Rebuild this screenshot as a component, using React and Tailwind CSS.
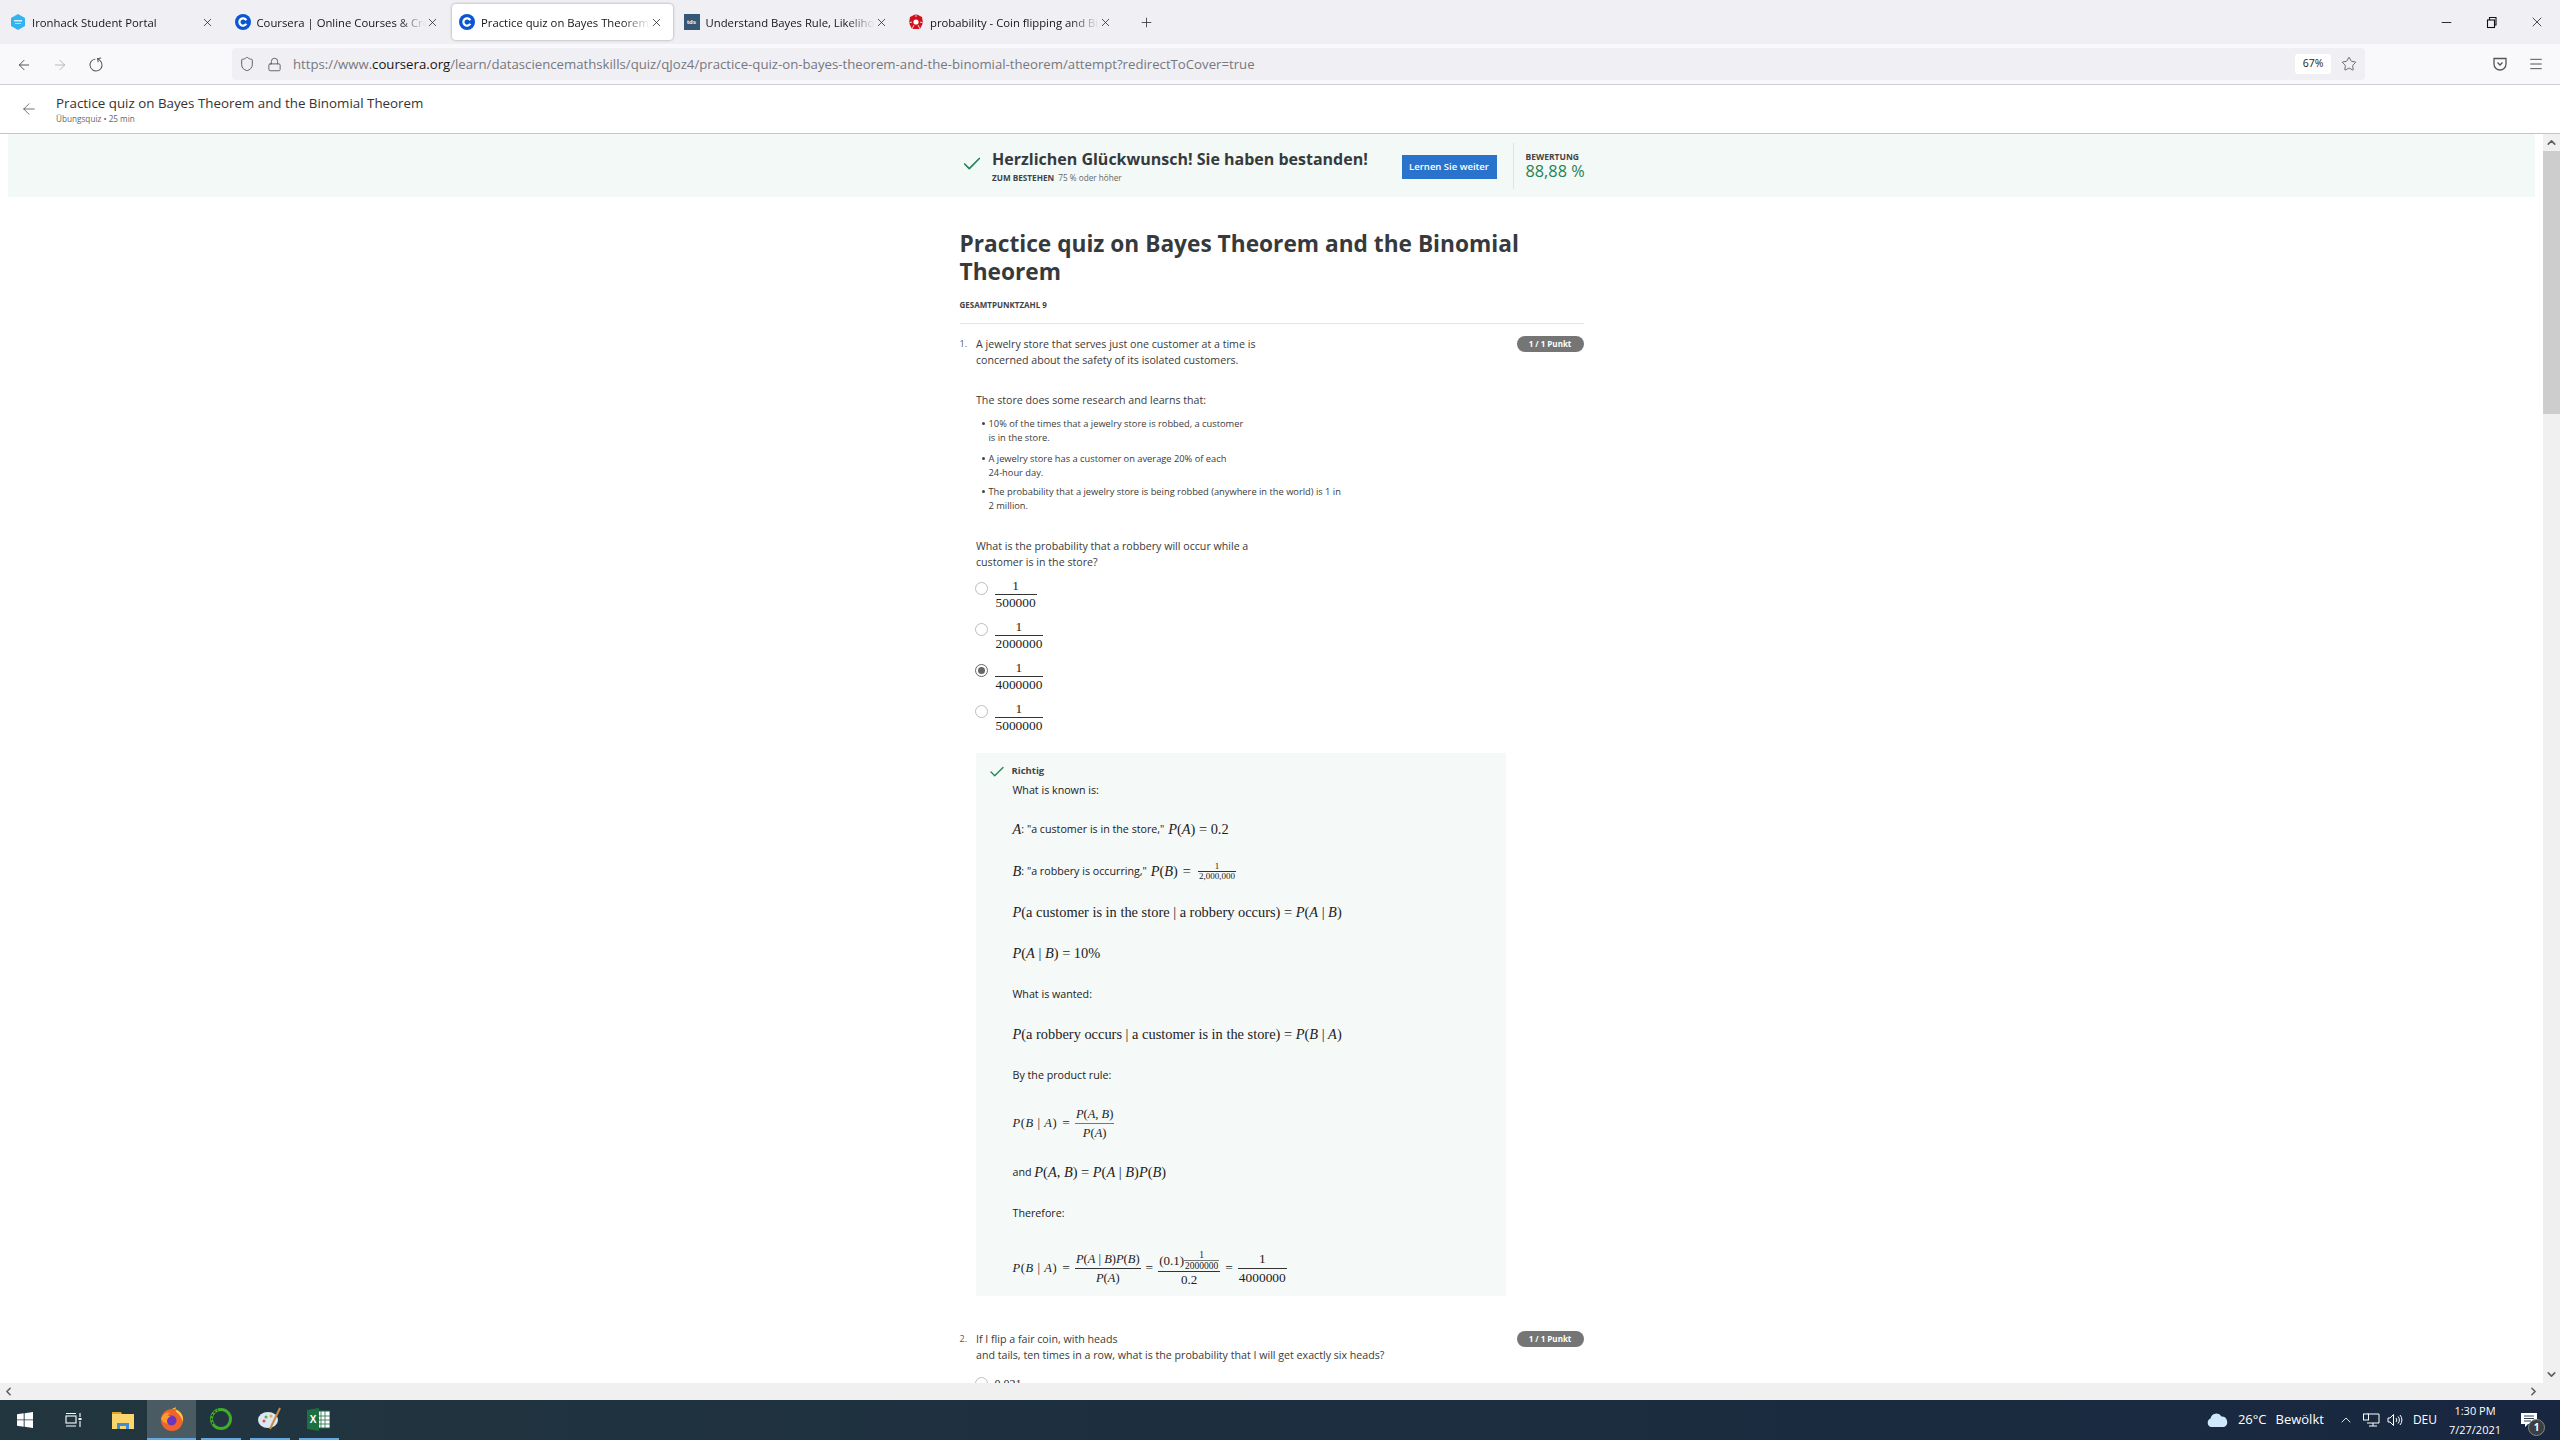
import React from "react";
import { X, Plus, Minus, ArrowLeft, ArrowRight, RotateCw, Shield, Lock, Star, Menu, ChevronUp, ChevronDown, ChevronLeft, ChevronRight, Check } from "lucide-react";

const open = "font-['Open_Sans','Noto_Sans',sans-serif]";
const serif = "font-['Liberation_Serif',serif]";

const tabs = [
  { title: "Ironhack Student Portal", icon: "iron" },
  { title: "Coursera | Online Courses & Credentials", icon: "c" },
  { title: "Practice quiz on Bayes Theorem and the Binomial", icon: "c", active: true },
  { title: "Understand Bayes Rule, Likelihood, Prior", icon: "tds" },
  { title: "probability - Coin flipping and Binomial", icon: "se" },
];

function Favicon({ type }) {
  if (type === "iron") {
    return (
      <svg width="16" height="16" viewBox="0 0 16 16">
        <path d="M8 0 L15 4 V12 L8 16 L1 12 V4 Z" fill="#35b3ee" />
        <rect x="4" y="6" width="8" height="1.5" fill="#fff" opacity="0.8" />
        <rect x="5" y="9" width="6" height="1" fill="#fff" opacity="0.6" />
      </svg>
    );
  }
  if (type === "c") {
    return (
      <svg width="16" height="16" viewBox="0 0 16 16">
        <circle cx="8" cy="8" r="8" fill="#0a56d2" />
        <path d="M11.3 6.2 A3.7 3.7 0 1 0 11.3 9.8" fill="none" stroke="#fff" strokeWidth="2.2" />
      </svg>
    );
  }
  if (type === "tds") {
    return (
      <div className="w-4 h-4 bg-[#355876] text-white text-[6px] font-bold leading-4 text-center font-['Liberation_Sans',sans-serif]">tds</div>
    );
  }
  return (
    <svg width="16" height="16" viewBox="0 0 16 16">
      <path d="M8 0 L14 3 L15 9 L12 15 L4 15 L1 9 L2 3 Z" fill="#d1101c" />
      <circle cx="8" cy="8" r="2.6" fill="#fff" />
      <path d="M8 0 V3 M1 9 L4 8 M15 9 L12 8 M4 15 L6 11 M12 15 L10 11" stroke="#fff" strokeWidth="0.8" />
    </svg>
  );
}

function Tab({ title, icon, active }) {
  return (
    <div className={`w-[221px] h-[36px] flex items-center pl-[7px] pr-[10px] rounded-[4px] ${active ? "bg-white shadow-[0_0_3px_rgba(0,0,0,0.35)]" : ""}`}>
      <div className="w-4 h-4 shrink-0">
        <Favicon type={icon} />
      </div>
      <div className="ml-[6px] pt-[2px] flex-1 min-w-0 overflow-hidden whitespace-nowrap text-[11.3px] text-[#15141a] [mask-image:linear-gradient(to_left,transparent_0,black_28px)]">
        {title}
      </div>
      <X size={13} strokeWidth={1.4} className="shrink-0 text-[#222]" />
    </div>
  );
}

function TabBar() {
  return (
    <div className={`h-[44px] bg-[#f0f0f4] flex items-start pt-[4px] pl-[3px] ${open}`}>
      <div className="flex gap-[3.5px]">
        {tabs.map((t) => (
          <Tab key={t.title} {...t} />
        ))}
      </div>
      <Plus size={15} strokeWidth={1.3} className="ml-[17px] mt-[11px] text-[#333]" />
      <div className="ml-auto flex items-center gap-[30px] pr-[15px] pt-[10px] text-[#111]">
        <Minus size={15} strokeWidth={1.4} />
        <svg width="15" height="15" viewBox="0 0 15 15" fill="none" stroke="#111" strokeWidth="1.1">
          <rect x="3.5" y="5" width="7" height="7.5" />
          <path d="M5.5 5 V2.5 H12 V10 H10.5" />
        </svg>
        <X size={16} strokeWidth={1.1} />
      </div>
    </div>
  );
}

function NavBar() {
  return (
    <div className={`h-[41px] bg-[#f9f9fb] border-b border-[#cfcfd3] flex items-center ${open}`}>
      <div className="w-[232px] flex items-center gap-[20px] pl-[16px] pt-[1px] shrink-0">
        <ArrowLeft size={16} strokeWidth={1.4} className="text-[#4a4a4f]" />
        <ArrowRight size={16} strokeWidth={1.4} className="text-[#b5b5b8]" />
        <RotateCw size={16} strokeWidth={1.4} className="text-[#4a4a4f] -scale-x-100 rotate-[80deg]" />
      </div>
      <div className="w-[2133px] h-[32px] bg-[#f0f0f4] rounded-[4px] flex items-center pl-[7px] pr-[8px]">
        <Shield size={16} strokeWidth={1.4} className="text-[#55555a]" />
        <Lock size={15} strokeWidth={1.4} className="ml-[12px] text-[#55555a]" />
        <div className="ml-[11px] pt-[2px] text-[13.2px] text-[#77777d] whitespace-nowrap">
          https://www.<span className="text-[#15141a]">coursera.org</span>/learn/datasciencemathskills/quiz/qJoz4/practice-quiz-on-bayes-theorem-and-the-binomial-theorem/attempt?redirectToCover=true
        </div>
        <div className="ml-auto w-[36px] h-[20px] bg-white rounded-[3px] text-[10.5px] text-[#222] flex items-center justify-center">67%</div>
        <Star size={16} strokeWidth={1.3} className="ml-[10px] text-[#55555a]" />
      </div>
      <div className="flex items-center ml-[127px] gap-[20px] text-[#55555a]">
        <svg width="16" height="16" viewBox="0 0 16 16" fill="none" stroke="currentColor" strokeWidth="1.3">
          <path d="M2 2.5 H14 V8 A6 6 0 0 1 2 8 Z" />
          <path d="M5.5 6.5 L8 9 L10.5 6.5" />
        </svg>
        <Menu size={16} strokeWidth={1.5} />
      </div>
    </div>
  );
}

function PageHeader() {
  return (
    <div className={`h-[49px] bg-white border-b border-[#c4c4c4] flex items-center pl-[20px] ${open}`}>
      <ArrowLeft size={18} strokeWidth={1} className="text-[#444]" />
      <div className="ml-[18px]">
        <div className="text-[13.35px] leading-[18px] text-[#333]">Practice quiz on Bayes Theorem and the Binomial Theorem</div>
        <div className="text-[8.2px] leading-[10px] mt-[2px] text-[#666]">Übungsquiz • 25 min</div>
      </div>
    </div>
  );
}

function Banner() {
  return (
    <div className="mx-[8px] h-[63px] bg-[#f3f9f7]">
      <div className="w-[624px] mx-auto h-full flex items-center">
        <Check size={22} strokeWidth={1.8} className="text-[#1f8354] shrink-0 ml-[1px] mt-[-4px]" />
        <div className="ml-[9.5px] w-[409.5px] shrink-0 pt-[1px]">
          <div className="text-[16px] leading-[22px] font-bold text-[#373a3c] whitespace-nowrap">Herzlichen Glückwunsch! Sie haben bestanden!</div>
          <div className="text-[8.2px] leading-[12px] mt-[2px] text-[#666] whitespace-nowrap">
            <span className="font-bold text-[#444]">ZUM BESTEHEN</span> <span className="ml-[2px]">75 % oder höher</span>
          </div>
        </div>
        <div className="w-[95px] h-[24px] mt-[3px] bg-[#2a73cc] text-white text-[9.5px] font-semibold flex items-center justify-center shrink-0">Lernen Sie weiter</div>
        <div className="ml-[16px] h-[46px] border-l border-[#dfe3e1] pl-[12px]">
          <div className="text-[8.5px] leading-[10px] font-bold text-[#444] mt-[9px]">BEWERTUNG</div>
          <div className="text-[16.3px] leading-[22px] -mt-[2px] text-[#1f8354] whitespace-nowrap">88,88 %</div>
        </div>
      </div>
    </div>
  );
}

function Badge() {
  return (
    <div className="w-[67px] h-[16px] rounded-full bg-[#757575] text-white text-[8px] font-bold flex items-center justify-center shrink-0">1 / 1 Punkt</div>
  );
}

function Radio({ checked }) {
  return (
    <div className={`w-[13px] h-[13px] rounded-full border-[1.5px] flex items-center justify-center shrink-0 bg-white ${checked ? "border-[#666]" : "border-[#bdbdbd]"}`}>
      {checked && <div className="w-[7px] h-[7px] rounded-full bg-[#666]" />}
    </div>
  );
}

function Frac({ top, bottom, size = "text-[13.4px]", rule = "border-[#333]", lead = "leading-[16px]" }) {
  return (
    <span className={`inline-flex flex-col items-center align-middle ${serif} ${size} ${lead} text-[#222]`}>
      <span className={`px-[1px] w-full text-center border-b ${rule}`}>{top}</span>
      <span className="px-[1px]">{bottom}</span>
    </span>
  );
}

function Option({ denom, checked }) {
  return (
    <div className="h-[41px] flex items-center">
      <div className="ml-[-1px] w-[20px] shrink-0 -mt-[11px]">
        <Radio checked={checked} />
      </div>
      <Frac top="1" bottom={denom} />
    </div>
  );
}

const I = ({ children }) => <i className={serif}>{children}</i>;

function Math({ children, size = "text-[14.4px]", className = "" }) {
  return <span className={`${serif} ${size} ${className} text-[#222] whitespace-nowrap`}>{children}</span>;
}

const Eq = ({ size = "text-[13.4px]" }) => <span className={`${serif} ${size} mx-[5px] text-[#222]`}>=</span>;

function Lhs() {
  return (
    <Math size="text-[12.5px]" className="tracking-[0.6px]">
      <I>P</I>(<I>B</I> | <I>A</I>)
    </Math>
  );
}

function Row({ mt, h = "h-[16px]", children }) {
  return <div className={`${h} ${mt} flex items-center text-[10.7px] text-[#222] whitespace-pre`}>{children}</div>;
}

function Explanation() {
  return (
    <div className="w-[530px] h-[543px] bg-[#f5f9f8] mt-[15px] pt-[11px] pl-[37px]">
      <div className="flex items-center h-[16px]">
        <Check size={18} strokeWidth={1.7} className="text-[#1f8354] -ml-[25px] mr-[6px]" />
        <span className="text-[9.5px] font-bold text-[#444]">Richtig</span>
      </div>
      <Row mt="mt-[3px]">What is known is:</Row>
      <Row mt="mt-[23px]">
        <Math><I>A</I></Math>: "a customer is in the store," <Math className="ml-[1px]"><I>P</I>(<I>A</I>) = 0.2</Math>
      </Row>
      <Row mt="mt-[26px]">
        <Math><I>B</I></Math>: "a robbery is occurring," <Math className="ml-[1px]"><I>P</I>(<I>B</I>)</Math>
        <Eq size="text-[14.4px]" />
        <span className="ml-[2px] flex">
          <Frac top="1" bottom="2,000,000" size="text-[9px]" lead="leading-[9px]" />
        </span>
      </Row>
      <Row mt="mt-[25px]">
        <Math><I>P</I>(a customer is in the store | a robbery occurs) = <I>P</I>(<I>A</I> | <I>B</I>)</Math>
      </Row>
      <Row mt="mt-[25px]">
        <Math><I>P</I>(<I>A</I> | <I>B</I>) = 10%</Math>
      </Row>
      <Row mt="mt-[25px]">What is wanted:</Row>
      <Row mt="mt-[24px]">
        <Math><I>P</I>(a robbery occurs | a customer is in the store) = <I>P</I>(<I>B</I> | <I>A</I>)</Math>
      </Row>
      <Row mt="mt-[25px]">By the product rule:</Row>
      <Row mt="mt-[20px]" h="h-[40px]">
        <Lhs />
        <Eq />
        <Frac top={<><I>P</I>(<I>A</I>, <I>B</I>)</>} bottom={<><I>P</I>(<I>A</I>)</>} size="text-[12.5px]" lead="leading-[18px]" rule="border-[#777]" />
      </Row>
      <Row mt="mt-[21px]">
        and <Math><I>P</I>(<I>A</I>, <I>B</I>) = <I>P</I>(<I>A</I> | <I>B</I>)<I>P</I>(<I>B</I>)</Math>
      </Row>
      <Row mt="mt-[25px]">Therefore:</Row>
      <Row mt="mt-[25px]" h="h-[44px]">
        <Lhs />
        <Eq />
        <Frac top={<><I>P</I>(<I>A</I> | <I>B</I>)<I>P</I>(<I>B</I>)</>} bottom={<><I>P</I>(<I>A</I>)</>} size="text-[12.5px]" lead="leading-[18px]" />
        <Eq />
        <Frac
          top={
            <span className="inline-flex items-center">
              (0.1)
              <Frac top="1" bottom="2000000" size="text-[9.5px]" lead="leading-[10px]" rule="border-[#777]" />
            </span>
          }
          bottom="0.2"
          size="text-[13px]"
          lead="leading-[15px]"
        />
        <Eq />
        <Frac top="1" bottom="4000000" size="text-[13.4px]" lead="leading-[18px]" />
      </Row>
    </div>
  );
}

function Bullet({ children, mt }) {
  return (
    <li className={`${mt} flex text-[9.3px] leading-[14px] text-[#3a3a3a]`}>
      <span className="w-[3px] h-[3px] rounded-full bg-[#444] mt-[5px] ml-[5px] mr-[4px] shrink-0" />
      <span>{children}</span>
    </li>
  );
}

function Quiz() {
  return (
    <div className="w-[624px] mx-auto">
      <h1 className="mt-[33px] text-[22.7px] leading-[28px] font-bold text-[#373a3c]">Practice quiz on Bayes Theorem and the Binomial Theorem</h1>
      <div className="mt-[14px] text-[8px] leading-[10px] font-bold text-[#444]">GESAMTPUNKTZAHL 9</div>
      <div className="mt-[13px] border-b border-[#e5e5e5]" />

      <div className="mt-[12px] flex items-start">
        <span className="w-[16.5px] text-[9px] leading-[16px] text-[#555] shrink-0">1.</span>
        <div className="flex-1 text-[10.65px] leading-[16px] text-[#3a3a3a]">
          A jewelry store that serves just one customer at a time is
          <br />
          concerned about the safety of its isolated customers.
        </div>
        <Badge />
      </div>

      <div className="ml-[16px]">
        <p className="mt-[24px] ml-[0.5px] text-[10.65px] leading-[16px] text-[#3a3a3a]">The store does some research and learns that:</p>
        <ul className="mt-[8.5px] ml-[1px]">
          <Bullet>10% of the times that a jewelry store is robbed, a customer<br />is in the store.</Bullet>
          <Bullet mt="mt-[7px]">A jewelry store has a customer on average 20% of each<br />24-hour day.</Bullet>
          <Bullet mt="mt-[5px]">The probability that a jewelry store is being robbed (anywhere in the world) is 1 in<br />2 million.</Bullet>
        </ul>
        <p className="mt-[25px] ml-[0.5px] text-[10.65px] leading-[16px] text-[#3a3a3a]">
          What is the probability that a robbery will occur while a
          <br />
          customer is in the store?
        </p>
        <div className="mt-[4px]">
          <Option denom="500000" />
          <Option denom="2000000" />
          <Option denom="4000000" checked />
          <Option denom="5000000" />
        </div>
        <Explanation />
      </div>

      <div className="mt-[35px] flex items-start">
        <span className="w-[16.5px] text-[9px] leading-[16px] text-[#555] shrink-0">2.</span>
        <div className="flex-1 text-[10.65px] leading-[16px] text-[#3a3a3a]">
          If I flip a fair coin, with heads
          <br />
          and tails, ten times in a row, what is the probability that I will get exactly six heads?
        </div>
        <Badge />
      </div>
      <div className="ml-[15px] mt-[13px] flex items-center h-[16px]">
        <div className="w-[20px]">
          <Radio />
        </div>
        <span className={`${serif} text-[12px] text-[#222]`}>0.021</span>
      </div>
    </div>
  );
}

function VScroll() {
  return (
    <div className="w-[17px] bg-[#f0f0f0] flex flex-col shrink-0">
      <div className="h-[17px] flex items-center justify-center">
        <ChevronUp size={13} strokeWidth={3} className="text-[#606060]" />
      </div>
      <div className="h-[263px] bg-[#cdcdcd]" />
      <div className="mt-auto h-[17px] flex items-center justify-center">
        <ChevronDown size={13} strokeWidth={3} className="text-[#606060]" />
      </div>
    </div>
  );
}

function HScroll() {
  return (
    <div className="h-[17px] bg-[#f0f0f0] flex items-center justify-between pl-[2px] pr-[20px]">
      <ChevronLeft size={13} strokeWidth={3} className="text-[#606060]" />
      <ChevronRight size={13} strokeWidth={3} className="text-[#606060]" />
    </div>
  );
}

function TaskItem({ children, active, running }) {
  return (
    <div className={`w-[49px] h-full flex flex-col items-center ${active ? "bg-[#4b5b64]" : ""}`}>
      <div className="flex-1 flex items-center justify-center">{children}</div>
      {running && <div className={`h-[2px] bg-[#64a9e0] ${active ? "w-full" : "w-[40px]"}`} />}
    </div>
  );
}

function Taskbar() {
  return (
    <div className={`h-[40px] bg-linear-to-r from-[#22363f] to-[#18273f] flex items-center text-white ${open}`}>
      <TaskItem>
        <svg width="16" height="16" viewBox="0 0 16 16" fill="#fff">
          <path d="M0 2.3 L6.7 1.3 V7.4 H0 Z M7.6 1.2 L16 0 V7.4 H7.6 Z M0 8.3 H6.7 V14.7 L0 13.7 Z M7.6 8.3 H16 V16 L7.6 14.8 Z" />
        </svg>
      </TaskItem>
      <TaskItem>
        <svg width="18" height="16" viewBox="0 0 18 16" fill="none" stroke="#fff" strokeWidth="1.1">
          <rect x="1" y="4" width="10" height="7" />
          <path d="M1 1.5 H11 M1 14 H11 M15 1 V5 M15 9 V15" />
          <rect x="13.5" y="6" width="3" height="2" fill="#fff" stroke="none" />
        </svg>
      </TaskItem>
      <TaskItem>
        <svg width="22" height="18" viewBox="0 0 22 18">
          <path d="M0 1 H9 L10 3 H0 Z" fill="#e0a526" />
          <rect x="0" y="3" width="22" height="15" fill="#fbd66c" />
          <path d="M5 18 V12 H17 V18 H14 V15 H8 V18 Z" fill="#3a8fd8" />
        </svg>
      </TaskItem>
      <TaskItem active running>
        <svg width="24" height="24" viewBox="0 0 24 24">
          <circle cx="12" cy="13" r="11" fill="#f0642c" />
          <path d="M12 2 C20 2 24 8 23 15 C21 9 18 6 16 5 C16 3 15 1 16 0 C14 1 13 1.5 12 2 Z" fill="#ffc93c" />
          <circle cx="11.5" cy="13.5" r="5" fill="#6a35c2" />
          <path d="M1 12 C3 6 7 5 10 6 L7 9 L11 9 C7 11 6 14 8 17 C5 16 3 15 1 12 Z" fill="#ff9a2e" />
        </svg>
      </TaskItem>
      <TaskItem running>
        <svg width="24" height="24" viewBox="0 0 24 24">
          <circle cx="12" cy="12" r="9.5" fill="none" stroke="#3fae2a" strokeWidth="3" />
          <path d="M4 17 A9.5 9.5 0 0 1 9 3" fill="none" stroke="#22361f" strokeWidth="1.5" strokeDasharray="2 2" />
        </svg>
      </TaskItem>
      <TaskItem running>
        <svg width="24" height="24" viewBox="0 0 24 24">
          <ellipse cx="10" cy="13" rx="10" ry="8" fill="#dbe7f2" />
          <circle cx="6" cy="14" r="1.5" fill="#e05050" />
          <circle cx="8" cy="10" r="1.5" fill="#58b04a" />
          <circle cx="13" cy="9" r="1.5" fill="#e8b030" />
          <path d="M22 1 L12 22" stroke="#c98a4a" strokeWidth="2" />
        </svg>
      </TaskItem>
      <TaskItem running>
        <svg width="23" height="23" viewBox="0 0 23 23">
          <rect x="9" y="3" width="14" height="17" fill="#fff" stroke="#1d7044" strokeWidth="1" />
          <path d="M14 3 V20 M18 3 V20 M9 8 H23 M9 12 H23 M9 16 H23" stroke="#1d7044" strokeWidth="0.8" />
          <path d="M0 2 L12 0 V23 L0 21 Z" fill="#1d6f42" />
          <text x="6" y="15" fill="#fff" fontSize="10" fontWeight="bold" textAnchor="middle" fontFamily="Liberation Sans">X</text>
        </svg>
      </TaskItem>

      <div className="ml-auto flex items-center h-full text-[13px] pr-[16px]">
        <svg width="23" height="16" viewBox="0 0 23 16">
          <path d="M5 15 A4.5 4.5 0 0 1 4.5 6.5 A6 6 0 0 1 15.5 4.5 A5.5 5.5 0 0 1 18 15 Z" fill="#cfe8fb" />
        </svg>
        <span className="ml-[9px]">26°C</span>
        <span className="ml-[9px]">Bewölkt</span>
        <ChevronUp size={16} strokeWidth={1.3} className="ml-[14px]" />
        <svg width="17" height="14" viewBox="0 0 17 14" fill="none" stroke="#fff" strokeWidth="1" className="ml-[9px]">
          <path d="M4 1 H16 V10 H4 M10 10 V13 M6 13 H14" />
          <rect x="0.5" y="1" width="5" height="6" fill="#1a2a40" />
        </svg>
        <svg width="17" height="14" viewBox="0 0 17 14" fill="none" stroke="#fff" strokeWidth="1" className="ml-[7px]">
          <path d="M1 5 H3 L6.5 1.5 V12.5 L3 9 H1 Z M9 5 A3 3 0 0 1 9 9 M11 3.5 A5 5 0 0 1 11 10.5 M13 2 A7.5 7.5 0 0 1 13 12" />
        </svg>
        <span className="ml-[9px] text-[12px]">DEU</span>
        <div className="ml-[11px] w-[54px] text-center text-[11px] leading-[19px]">
          <div>1:30 PM</div>
          <div>7/27/2021</div>
        </div>
        <div className="ml-[12px] w-[30px] h-full flex items-center justify-center relative">
          <svg width="16" height="16" viewBox="0 0 16 16">
            <path d="M0 1 H16 V12 H7 L4 15 V12 H0 Z" fill="#fff" />
            <path d="M3 4 H13 M3 6.5 H13 M3 9 H10" stroke="#1a2a40" strokeWidth="0.9" />
          </svg>
          <div className="absolute -right-[1px] bottom-[4px] w-[17px] h-[17px] rounded-full bg-[#3a3f45] border border-[#888] text-[10px] font-bold flex items-center justify-center">1</div>
        </div>
      </div>
    </div>
  );
}

export default function App() {
  return (
    <div className={`w-[2560px] h-[1440px] flex flex-col overflow-hidden bg-white ${open}`}>
      <TabBar />
      <NavBar />
      <PageHeader />
      <div className="flex-1 min-h-0 flex">
        <div className="flex-1 min-w-0 overflow-hidden bg-white">
          <Banner />
          <Quiz />
        </div>
        <VScroll />
      </div>
      <HScroll />
      <Taskbar />
    </div>
  );
}
